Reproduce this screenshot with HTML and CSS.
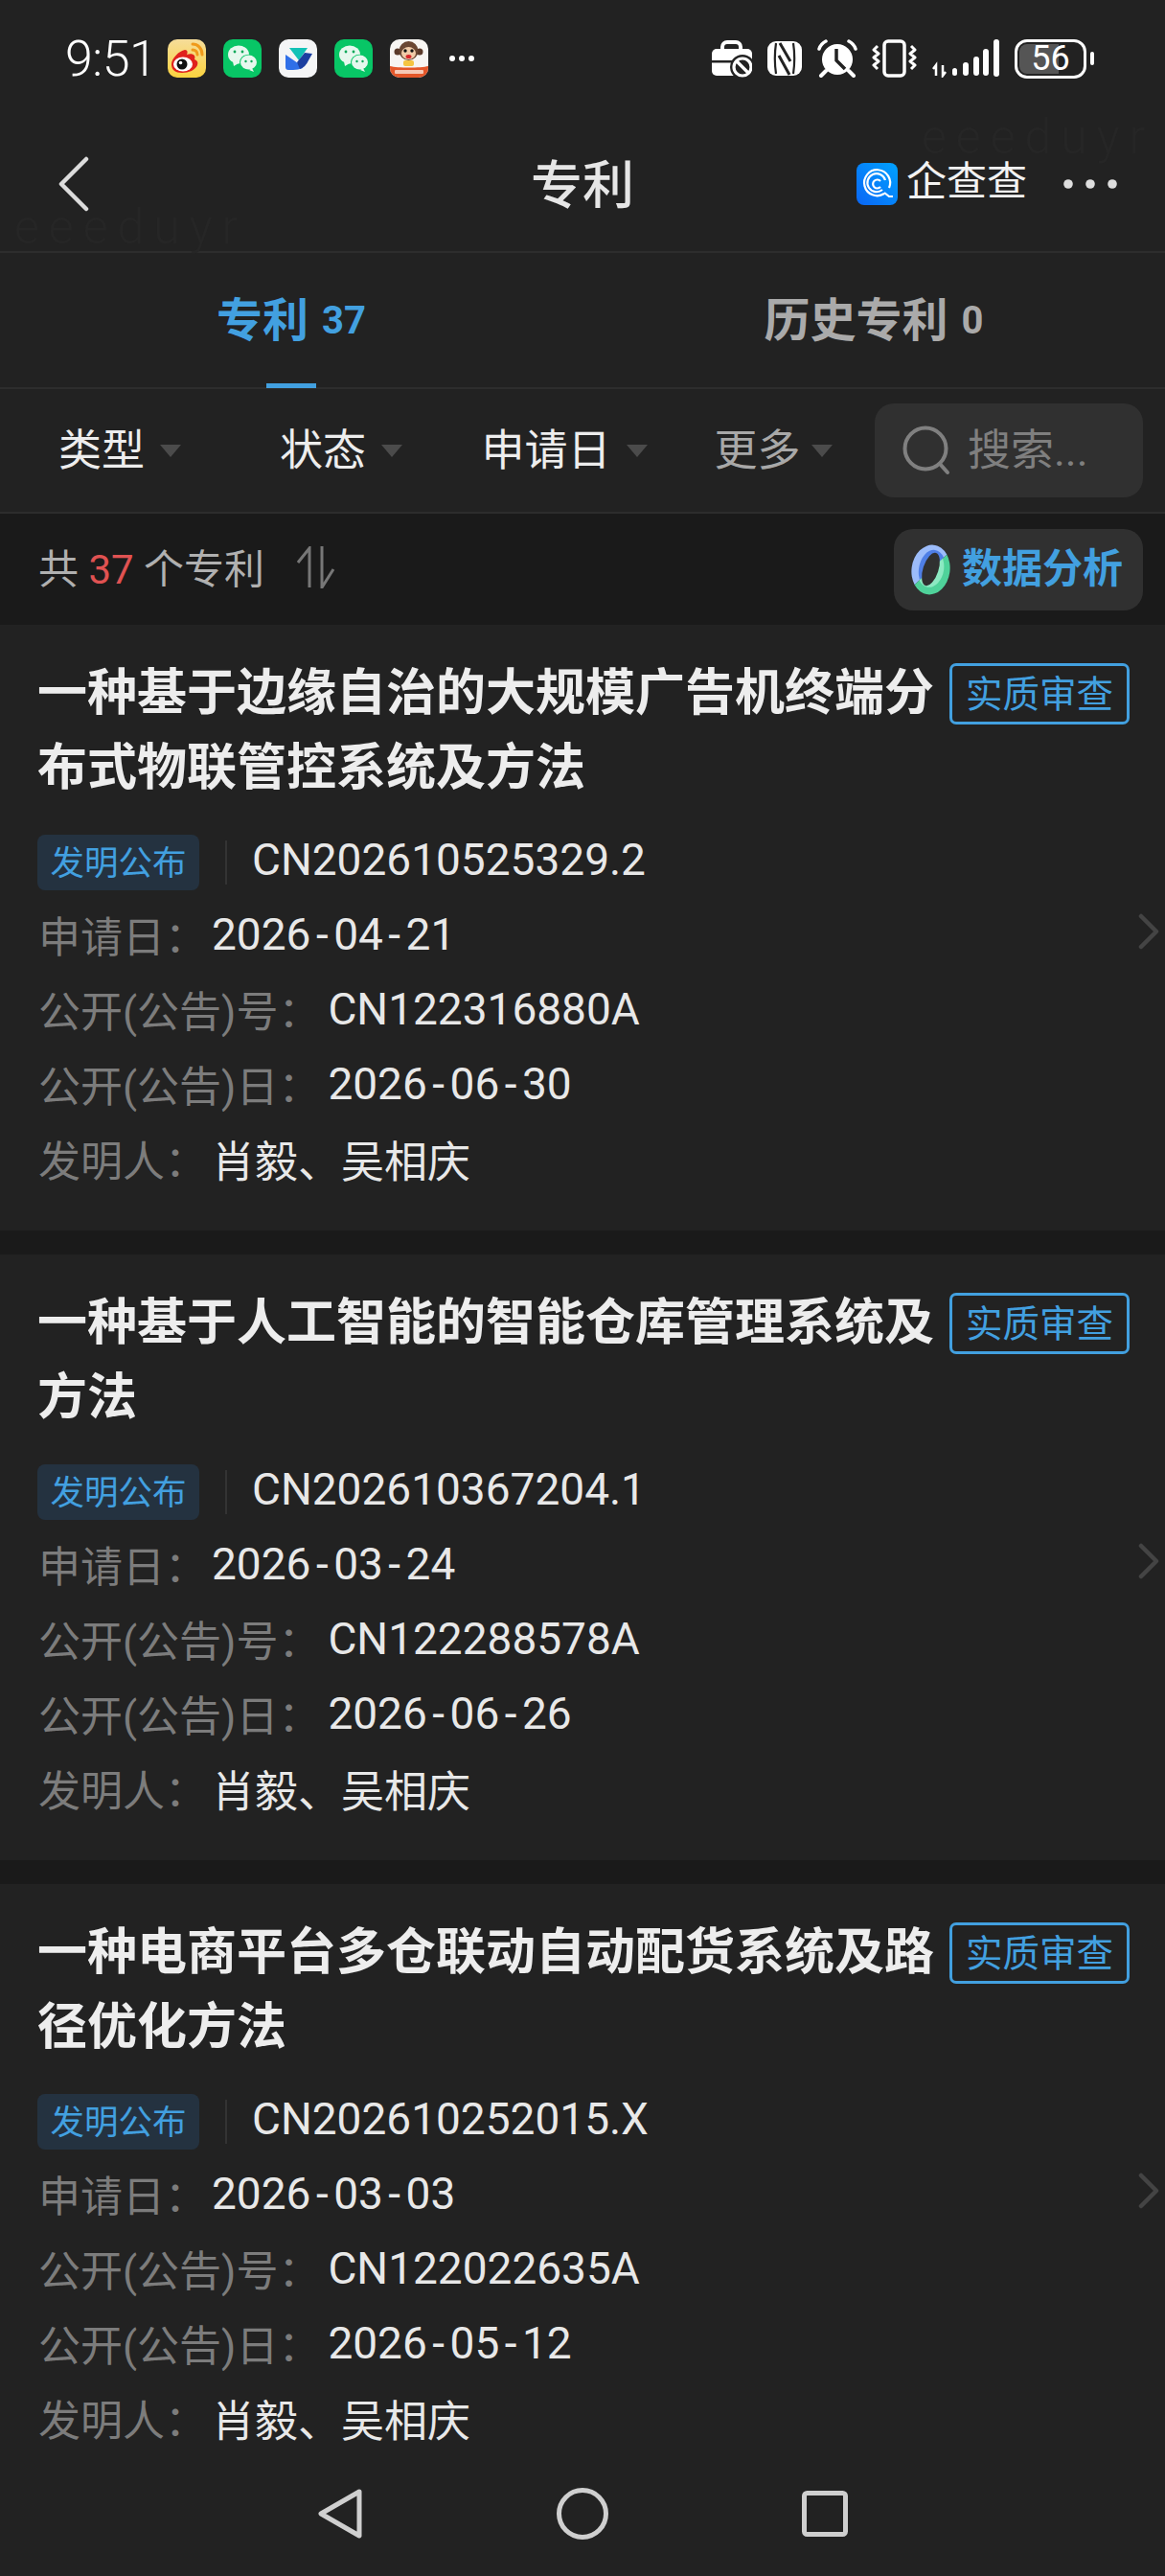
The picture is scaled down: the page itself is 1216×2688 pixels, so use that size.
FILE: index.html
```html
<!DOCTYPE html>
<html lang="zh-CN">
<head>
<meta charset="utf-8">
<title>专利</title>
<link rel="stylesheet" href="styles.css">
</head>
<body>
<div class="phone">
  <div class="ghost ghost-a">eeeduyr</div>
  <div class="ghost ghost-b">eeeduyr</div>

  <header class="status">
    <div class="status-left">
      <span class="time">9:51</span>
      <div class="apps">
        <svg class="app" viewBox="0 0 40 40"><defs><linearGradient id="wb" x1="0" y1="0" x2="0" y2="1"><stop offset="0" stop-color="#f6dd9a"/><stop offset="1" stop-color="#fbd33f"/></linearGradient></defs><rect width="40" height="40" rx="10" fill="url(#wb)"/><path d="M4 26c0-6 8-14 14-15 3 0 3 3 2 5 5-2 10 0 8 5 3 1 4 3 3 6-2 5-9 8-16 8-7 0-11-3-11-9z" fill="#e0211d"/><ellipse cx="16" cy="26" rx="10" ry="7.500" fill="#fff"/><circle cx="15" cy="26" r="5.500" fill="#111"/><circle cx="13.500" cy="24.500" r="1.800" fill="#fff"/><path d="M26 5c5 0 10 4 10 11M26 11c3 0 5 2 5 5" fill="none" stroke="#f09a1a" stroke-width="3" stroke-linecap="round"/></svg>
        <svg class="app" viewBox="0 0 40 40"><rect width="40" height="40" rx="10" fill="#08c666"/><ellipse cx="16" cy="16" rx="11" ry="9.5" fill="#e6f8ee"/><path d="M10 23l1 5 5-3z" fill="#e6f8ee"/><circle cx="12" cy="13" r="1.4" fill="#08a858"/><circle cx="20" cy="13" r="1.4" fill="#08a858"/><ellipse cx="26.500" cy="24" rx="9.500" ry="8.200" fill="#08c666"/><ellipse cx="26.500" cy="24" rx="8.500" ry="7.400" fill="#e6f8ee"/><path d="M30 30l2 4-5-2z" fill="#e6f8ee"/><circle cx="23.500" cy="23" r="1.200" fill="#08a858"/><circle cx="29.500" cy="23" r="1.200" fill="#08a858"/></svg>
        <svg class="app" viewBox="0 0 40 40"><rect width="40" height="40" rx="10" fill="#f4f5f6"/><path d="M11 9h19L21 22z" fill="#12c2b6"/><path d="M7 16l13 9 5 5q-5 2-10 2h-5q-3 0-3-3z" fill="#2f6fe8"/><path d="M19 24l8-10 8 1-4 7q-3 7-9 9z" fill="#1b3fa0"/></svg>
        <svg class="app" viewBox="0 0 40 40"><rect width="40" height="40" rx="10" fill="#08c666"/><ellipse cx="16" cy="16" rx="11" ry="9.5" fill="#e6f8ee"/><path d="M10 23l1 5 5-3z" fill="#e6f8ee"/><circle cx="12" cy="13" r="1.4" fill="#08a858"/><circle cx="20" cy="13" r="1.4" fill="#08a858"/><ellipse cx="26.500" cy="24" rx="9.500" ry="8.200" fill="#08c666"/><ellipse cx="26.500" cy="24" rx="8.500" ry="7.400" fill="#e6f8ee"/><path d="M30 30l2 4-5-2z" fill="#e6f8ee"/><circle cx="23.500" cy="23" r="1.200" fill="#08a858"/><circle cx="29.500" cy="23" r="1.200" fill="#08a858"/></svg>
        <svg class="app" viewBox="0 0 40 40"><defs><clipPath id="mk"><rect width="40" height="40" rx="10"/></clipPath></defs><g clip-path="url(#mk)"><rect width="40" height="40" fill="#f7f5f2"/><path d="M0 28c8 2 32 2 40 0v12H0z" fill="#e4572a"/><circle cx="8" cy="13" r="3.500" fill="#5a3a2a"/><circle cx="31" cy="13" r="3.500" fill="#5a3a2a"/><circle cx="19.500" cy="12" r="10" fill="#6a4632"/><ellipse cx="19.500" cy="14.500" rx="7.500" ry="6.500" fill="#f1cba8"/><circle cx="16" cy="12" r="1.700" fill="#111"/><circle cx="23" cy="12" r="1.700" fill="#111"/><ellipse cx="19.500" cy="18" rx="3" ry="2" fill="#d8262a"/><rect x="14" y="22" width="11" height="6" rx="2" fill="#f5c542"/><rect x="5" y="32" width="30" height="4" rx="1" fill="#f6c9b6"/></g></svg>
      </div>
      <svg class="more-dots" viewBox="0 0 28 8"><circle cx="4" cy="4" r="3" fill="#fff"/><circle cx="14" cy="4" r="3" fill="#fff"/><circle cx="24" cy="4" r="3" fill="#fff"/></svg>
    </div>
    <div class="status-right">
      <svg class="si-case" viewBox="0 0 42 40"><path d="M11 13V8a5 5 0 0 1 5-5h9a5 5 0 0 1 5 5v5" fill="none" stroke="#fff" stroke-width="4"/><rect y="10" width="42" height="28" rx="5" fill="#fff"/><rect y="22" width="42" height="2.500" fill="#222"/><circle cx="32" cy="29" r="13" fill="#222"/><circle cx="32" cy="29" r="9" fill="none" stroke="#fff" stroke-width="3.200"/><path d="M26 23l12 12" stroke="#fff" stroke-width="3.200"/></svg>
      <svg class="si-nfc" viewBox="0 0 36 36"><rect width="36" height="36" rx="9" fill="#fff"/><path d="M9 2c-1.500 10-1.500 22 0 32M27 2c1.500 10 1.500 22 0 32" fill="none" stroke="#222" stroke-width="2.200"/><path d="M13 2l11 19M12 15l11 20" fill="none" stroke="#222" stroke-width="3"/></svg>
      <svg class="si-alarm" viewBox="0 0 42 40"><circle cx="21" cy="21" r="16" fill="#fff"/><path d="M20 10v12l9 9" fill="none" stroke="#222" stroke-width="3.500"/><path d="M2 10c1-3 3-6 7-8M40 10c-1-3-3-6-7-8" fill="none" stroke="#fff" stroke-width="3.500" stroke-linecap="round"/><path d="M4 38l5-5M38 38l-5-5" stroke="#fff" stroke-width="4" stroke-linecap="round"/></svg>
      <svg class="si-vib" viewBox="0 0 47 40"><rect x="13" y="2" width="21" height="36" rx="4" fill="none" stroke="#fff" stroke-width="3.500"/><path d="M6 7L2 11l5 4-5 4 5 4-5 4 4 4M41 7l4 4-5 4 5 4-5 4 5 4-4 4" fill="none" stroke="#fff" stroke-width="3" stroke-linejoin="round"/></svg>
      <svg class="si-sig" viewBox="0 0 70 40"><path d="M4 38V27l-3 4M11 27v11l3-4" fill="none" stroke="#fff" stroke-width="2.500"/><rect x="21" y="30" width="5" height="8" rx="2.500" fill="#fff"/><rect x="32" y="24" width="6" height="14" rx="3" fill="#fff"/><rect x="43" y="18" width="6" height="20" rx="3" fill="#fff"/><rect x="53" y="10" width="6" height="28" rx="3" fill="#fff"/><rect x="64" y="0" width="6" height="39" rx="3" fill="#fff"/></svg>
      <div class="battery">
        <div class="batt-fill"></div>
        <span class="batt-num">56</span>
      </div>
      <div class="batt-nub"></div>
    </div>
  </header>

  <nav class="navbar">
    <div class="nav-left">
      <svg class="back" viewBox="0 0 36 58"><path d="M31 3L5 29l26 26" fill="none" stroke="#dcdcdc" stroke-width="4.500" stroke-linecap="round" stroke-linejoin="round"/></svg>
    </div>
    <h1 class="nav-title">专利</h1>
    <div class="nav-right">
      <svg class="qcc" viewBox="0 0 43 44"><defs><linearGradient id="qg" x1="0" y1="1" x2="1" y2="0"><stop offset="0" stop-color="#0a66f5"/><stop offset="1" stop-color="#00a2ff"/></linearGradient></defs><rect width="43" height="44" rx="8" fill="url(#qg)"/><path d="M29 32a13.500 13.500 0 1 1 5-6" fill="none" stroke="#fff" stroke-width="2.200"/><path d="M27 28a9.500 9.500 0 1 1 3-10" fill="none" stroke="#fff" stroke-width="2.200"/><path d="M25 19a4.500 4.500 0 1 0 0 6" fill="none" stroke="#fff" stroke-width="2.200"/><path d="M29 31l5 4h4" fill="none" stroke="#fff" stroke-width="2.200"/></svg>
      <span class="qcc-name">企查查</span>
      <svg class="nav-dots" viewBox="0 0 56 10"><circle cx="5" cy="5" r="4.800" fill="#dedede"/><circle cx="28" cy="5" r="4.800" fill="#dedede"/><circle cx="51" cy="5" r="4.800" fill="#dedede"/></svg>
    </div>
  </nav>

  <section class="tabs">
    <div class="tab tab-on"><span class="tab-text">专利</span><span class="tab-num">37</span><i class="tab-bar"></i></div>
    <div class="tab"><span class="tab-text">历史专利</span><span class="tab-num">0</span></div>
  </section>

  <section class="filters">
    <div class="filter"><span class="filter-label">类型</span><i class="caret"></i></div>
    <div class="filter"><span class="filter-label">状态</span><i class="caret"></i></div>
    <div class="filter"><span class="filter-label">申请日</span><i class="caret"></i></div>
    <div class="filter filter-more"><span class="filter-label">更多</span><i class="caret"></i></div>
    <div class="search">
      <svg class="search-ico" viewBox="0 0 50 52"><circle cx="24" cy="24" r="21.500" fill="none" stroke="#808080" stroke-width="4"/><path d="M39 40l8 9" stroke="#808080" stroke-width="4" stroke-linecap="round"/></svg>
      <span class="filter-label">搜索...</span>
    </div>
  </section>

  <section class="count">
    <div class="count-text">
      <span class="count-label">共 <b>37</b> 个专利</span>
      <svg class="sort" viewBox="0 0 40 44"><path d="M1 17L13 2v41M26 0v43l12-19" fill="none" stroke="#777" stroke-width="3"/></svg>
    </div>
    <div class="analyse">
      <svg class="analyse-ico" viewBox="0 0 43 53"><defs><clipPath id="ab"><path d="M0 0h43L0 53z"/></clipPath><clipPath id="ag"><path d="M43 0v53H0z"/></clipPath></defs><g transform="translate(21.500 26.500) rotate(8)"><g clip-path="url(#ab)" transform="translate(-21.500 -26.500)"><ellipse cx="21.500" cy="26.500" rx="20" ry="26" fill="#9cbcfa"/><ellipse cx="23" cy="26.500" rx="14" ry="21" fill="#4f7fe6"/></g><g clip-path="url(#ag)" transform="translate(-21.500 -26.500)"><ellipse cx="21.500" cy="26.500" rx="20" ry="26" fill="#4fd29a"/><ellipse cx="21" cy="25" rx="14" ry="20" fill="#8ce9c2"/></g></g><ellipse cx="21.500" cy="26" rx="8" ry="18" transform="rotate(18 21.500 26)" fill="#303030"/></svg>
      <span class="analyse-label">数据分析</span>
    </div>
  </section>

  <main class="list">
    <article class="card">
      <div class="card-head">
        <h2 class="card-title">一种基于边缘自治的大规模广告机终端分布式物联管控系统及方法</h2>
        <span class="state"><span class="state-label">实质审查</span></span>
      </div>
      <div class="row"><span class="kind">发明公布</span><i class="sep"></i><span class="val">CN202610525329.2</span></div>
      <div class="row"><span class="lab">申请日：</span><span class="val">2026<span class="dash">-</span>04<span class="dash">-</span>21</span></div>
      <div class="row"><span class="lab lab-long">公开(公告)号：</span><span class="val">CN122316880A</span></div>
      <div class="row"><span class="lab lab-long">公开(公告)日：</span><span class="val">2026<span class="dash">-</span>06<span class="dash">-</span>30</span></div>
      <div class="row"><span class="lab">发明人：</span><span class="val val-name">肖毅、吴相庆</span></div>
      <svg class="chev" viewBox="0 0 22 38"><path d="M3 3l16 16L3 35" fill="none" stroke="#444" stroke-width="4.500" stroke-linecap="round" stroke-linejoin="round"/></svg>
    </article>
    <article class="card">
      <div class="card-head">
        <h2 class="card-title">一种基于人工智能的智能仓库管理系统及方法</h2>
        <span class="state"><span class="state-label">实质审查</span></span>
      </div>
      <div class="row"><span class="kind">发明公布</span><i class="sep"></i><span class="val">CN202610367204.1</span></div>
      <div class="row"><span class="lab">申请日：</span><span class="val">2026<span class="dash">-</span>03<span class="dash">-</span>24</span></div>
      <div class="row"><span class="lab lab-long">公开(公告)号：</span><span class="val">CN122288578A</span></div>
      <div class="row"><span class="lab lab-long">公开(公告)日：</span><span class="val">2026<span class="dash">-</span>06<span class="dash">-</span>26</span></div>
      <div class="row"><span class="lab">发明人：</span><span class="val val-name">肖毅、吴相庆</span></div>
      <svg class="chev" viewBox="0 0 22 38"><path d="M3 3l16 16L3 35" fill="none" stroke="#444" stroke-width="4.500" stroke-linecap="round" stroke-linejoin="round"/></svg>
    </article>
    <article class="card">
      <div class="card-head">
        <h2 class="card-title">一种电商平台多仓联动自动配货系统及路径优化方法</h2>
        <span class="state"><span class="state-label">实质审查</span></span>
      </div>
      <div class="row"><span class="kind">发明公布</span><i class="sep"></i><span class="val">CN202610252015.X</span></div>
      <div class="row"><span class="lab">申请日：</span><span class="val">2026<span class="dash">-</span>03<span class="dash">-</span>03</span></div>
      <div class="row"><span class="lab lab-long">公开(公告)号：</span><span class="val">CN122022635A</span></div>
      <div class="row"><span class="lab lab-long">公开(公告)日：</span><span class="val">2026<span class="dash">-</span>05<span class="dash">-</span>12</span></div>
      <div class="row"><span class="lab">发明人：</span><span class="val val-name">肖毅、吴相庆</span></div>
      <svg class="chev" viewBox="0 0 22 38"><path d="M3 3l16 16L3 35" fill="none" stroke="#444" stroke-width="4.500" stroke-linecap="round" stroke-linejoin="round"/></svg>
    </article>
  </main>

  <footer class="sysnav">
    <svg class="sys-back" viewBox="0 0 46 54"><path d="M43 4L3 27l40 23z" fill="none" stroke="#cfcfcf" stroke-width="5" stroke-linejoin="round"/></svg>
    <svg class="sys-home" viewBox="0 0 54 54"><circle cx="27" cy="27" r="24.500" fill="none" stroke="#cfcfcf" stroke-width="5"/></svg>
    <svg class="sys-recent" viewBox="0 0 48 48"><rect x="2.500" y="2.500" width="43" height="43" rx="3" fill="none" stroke="#cfcfcf" stroke-width="5"/></svg>
  </footer>
</div>
</body>
</html>
```

FILE: styles.css
```css
* { box-sizing: border-box; }
html, body { margin: 0; padding: 0; background: #222; }
body { font-family: Roboto, "Noto Sans CJK SC", sans-serif; }
h1, h2 { margin: 0; font: inherit; }
i { display: block; }
svg { display: block; flex: none; }

.phone {
  position: relative;
  width: 1216px;
  height: 2688px;
  overflow: hidden;
  display: flex;
  flex-direction: column;
  background: #222;
  color: #ededed;
}

.ghost {
  position: absolute;
  font-size: 50px;
  font-weight: 300;
  letter-spacing: 10px;
  color: #262626;
  line-height: 36px;
}
.ghost-a { left: 15px; top: 219px; }
.ghost-b { left: 962px; top: 125px; }

.status {
  height: 122px;
  flex: none;
  display: flex;
  justify-content: space-between;
  align-items: center;
  padding: 0 74px 0 68px;
}
.status-left, .status-right, .apps { display: flex; align-items: center; }
.time { width: 107px; font-size: 52px; font-weight: 300; color: #fff; letter-spacing: -0.5px; }
.apps { gap: 18px; }
.app { width: 40px; height: 40px; }
.more-dots { width: 28px; height: 8px; margin-left: 21px; }
.si-case { width: 42px; height: 40px; margin-right: 16px; }
.si-nfc { width: 36px; height: 36px; margin-right: 16px; }
.si-alarm { width: 42px; height: 40px; margin-right: 15px; }
.si-vib { width: 47px; height: 40px; margin-right: 16px; }
.si-sig { width: 70px; height: 40px; margin-right: 16px; }
.battery {
  position: relative;
  width: 75px;
  height: 41px;
  border: 3px solid #fff;
  border-radius: 13px;
  overflow: hidden;
  display: flex;
  align-items: center;
  justify-content: center;
}
.batt-fill { position: absolute; left: 2px; top: 2px; bottom: 2px; width: 41px; background: #555; border-radius: 8px 0 0 8px; }
.batt-num { position: relative; font-size: 36px; line-height: 35px; color: #fff; }
.batt-nub { width: 4px; height: 14px; margin-left: 4px; border-radius: 2px; background: #fff; }

.navbar {
  height: 142px;
  flex: none;
  display: grid;
  grid-template-columns: 1fr auto 1fr;
  align-items: center;
  padding: 0 50px;
  border-bottom: 2px solid #2d2d2d;
}
.back { width: 36px; height: 58px; margin-left: 9px; }
.nav-title { font-size: 54px; font-weight: 500; color: #e6e6e6; text-align: center; margin-bottom: 6px; }
.nav-right { display: flex; align-items: center; justify-content: flex-end; }
.qcc { width: 43px; height: 44px; }
.qcc-name { margin-left: 9px; font-size: 42px; line-height: 44px; color: #f2f2f2; margin-bottom: 4px; }
.nav-dots { width: 56px; height: 10px; margin-left: 38px; }

.tabs {
  height: 142px;
  flex: none;
  display: grid;
  grid-template-columns: 1fr 1fr;
  border-bottom: 2px solid #2d2d2d;
}
.tab {
  position: relative;
  display: flex;
  align-items: center;
  justify-content: center;
  color: #aaa;
  padding-bottom: 2px;
}
.tab-text { font-size: 48px; font-weight: 700; margin-bottom: 6px; }
.tab-num { margin-left: 14px; font-size: 40px; font-weight: 700; margin-top: 2px; }
.tab-on { color: #42a0e0; }
.tab-bar {
  position: absolute;
  left: 50%;
  bottom: -1px;
  width: 52px;
  height: 5px;
  margin-left: -26px;
  background: #42a0e0;
}

.filters {
  height: 130px;
  flex: none;
  display: grid;
  grid-template-columns: 250px 212px 254px 182px 280px;
  column-gap: 0;
  align-items: center;
  padding-right: 23px;
  border-bottom: 2px solid #2d2d2d;
}
.filter { display: flex; align-items: center; justify-content: center; font-size: 45px; color: #ededed; }
.filter-label { margin-bottom: 8px; }
.filter-more { color: #a8a8a8; }
.caret {
  width: 0;
  height: 0;
  margin-left: 16px;
  border-left: 11px solid transparent;
  border-right: 11px solid transparent;
  border-top: 13px solid #4b4b4b;
}
.filter-more .caret { margin-left: 11px; }
.search {
  grid-column: 5;
  margin-left: 15px;
  width: 280px;
  height: 98px;
  display: flex;
  align-items: center;
  padding-left: 29px;
  border-radius: 20px;
  background: #303030;
  color: #7f7f7f;
  font-size: 45px;
}
.search-ico { width: 50px; height: 52px; margin-right: 18px; }

.count {
  height: 116px;
  flex: none;
  display: flex;
  align-items: center;
  justify-content: space-between;
  padding: 0 23px 0 40px;
  background: #1a1a1a;
}
.count-text { display: flex; align-items: center; font-size: 42px; color: #b0b0b0; margin-bottom: 5px; }
.count-label { margin-bottom: 3px; }
.count-text b { font-weight: 400; color: #e05252; }
.sort { width: 40px; height: 44px; margin-left: 34px; }
.analyse {
  width: 260px;
  height: 85px;
  display: flex;
  align-items: center;
  padding-left: 17px;
  border-radius: 20px;
  background: #303030;
  color: #42a0e0;
  font-size: 42px;
  font-weight: 700;
}
.analyse-label { margin-bottom: 9px; margin-left: -1px; }
.analyse-ico { width: 43px; height: 53px; margin-right: 12px; }

.list {
  flex: 1;
  min-height: 0;
  overflow: hidden;
  display: flex;
  flex-direction: column;
  gap: 25px;
  background: #1a1a1a;
}
.card {
  position: relative;
  flex: none;
  height: 632px;
  padding: 33px 36px 0 39px;
  background: #222;
}
.card-head { display: flex; align-items: flex-start; justify-content: space-between; margin-bottom: 20px; }
.card-title { width: 936px; font-size: 52px; font-weight: 700; line-height: 78px; color: #ededed; }
.state {
  flex: none;
  width: 188px;
  height: 64px;
  margin-top: 7px;
  margin-right: 1px;
  display: flex;
  align-items: center;
  justify-content: center;
  border: 3px solid #42a0e0;
  border-radius: 7px;
  color: #42a0e0;
  font-size: 38.500px;
}
.state-label { margin-bottom: 6px; }
.row { height: 78px; display: flex; align-items: center; font-size: 46px; }
.kind {
  width: 169px;
  height: 58px;
  display: flex;
  align-items: center;
  justify-content: center;
  padding-bottom: 5px;
  border-radius: 8px;
  background: #243240;
  color: #42a0e0;
  font-size: 35.500px;
}
.sep { width: 2px; height: 46px; margin: 0 26px 0 27px; background: #333; }
.lab { color: #7c7c7c; font-size: 44px; margin-bottom: 6px; margin-left: 1px; }
.lab-long { margin-right: 3px; }
.val { color: #e8e8e8; margin-left: 5px; margin-bottom: 6px; }
.sep + .val { margin-left: 0; }
.val-name { font-size: 45px; }
.dash { padding: 0 5.500px; }
.chev { position: absolute; right: 6px; top: 301px; width: 22px; height: 38px; }

.sysnav {
  height: 118px;
  flex: none;
  display: grid;
  grid-template-columns: 253px 253px 253px;
  justify-content: center;
  justify-items: center;
  align-items: center;
  padding-bottom: 12px;
  background: #222;
}
.sys-back { width: 46px; height: 54px; }
.sys-home { width: 54px; height: 54px; }
.sys-recent { width: 48px; height: 48px; }
```
